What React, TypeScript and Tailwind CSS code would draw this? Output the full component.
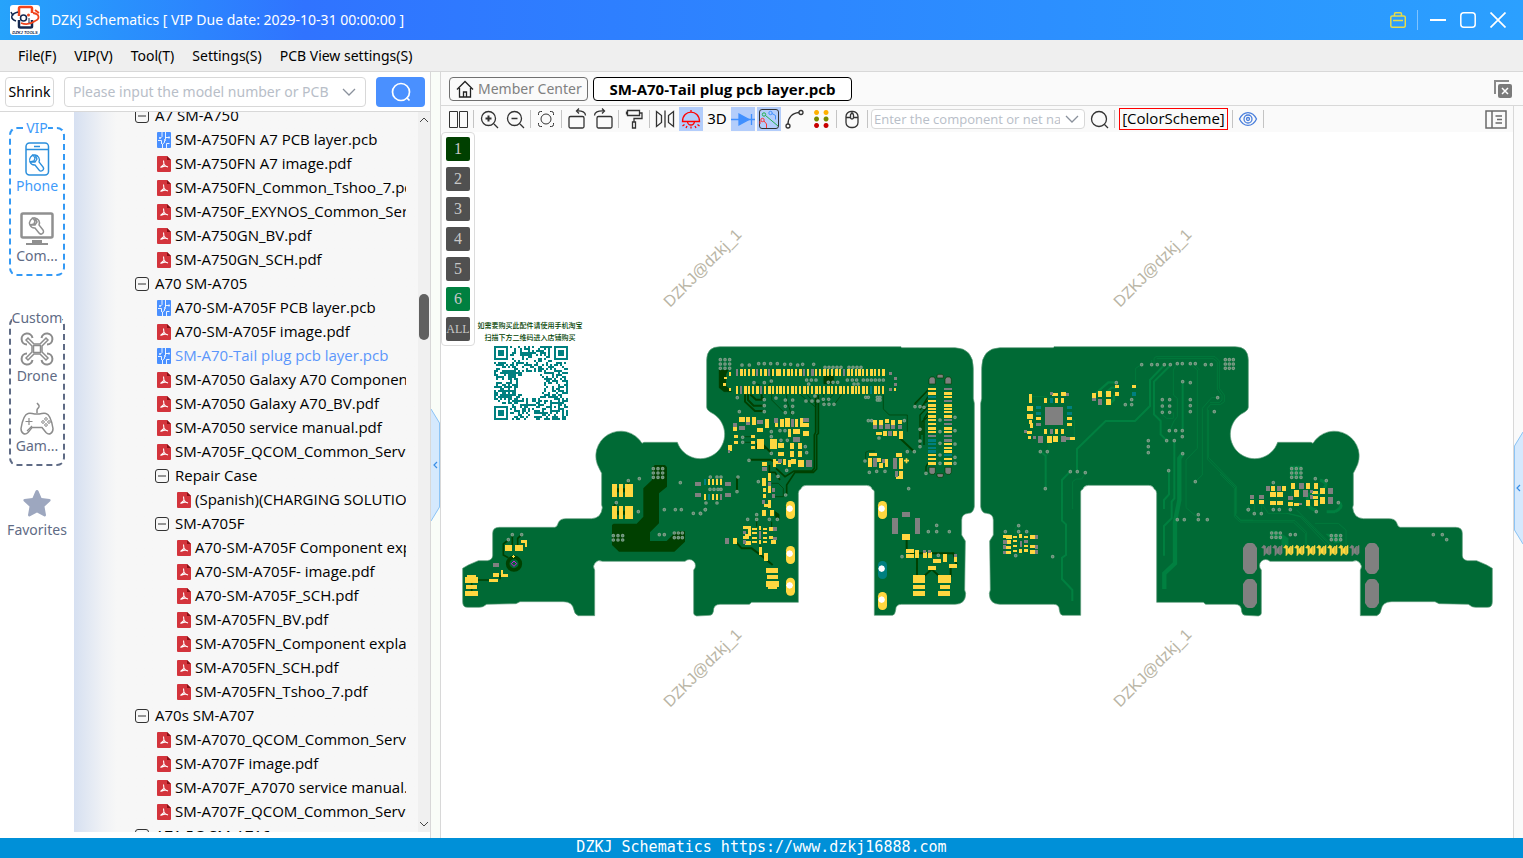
import type { ReactNode } from "react";
import clsx from "clsx";

type Box = [number, number, number, number];
type Point = [number, number];

const YELLOW = "#ffd740";
const GRAY = "#808080";
const TEAL = "#008080";
const BOARD = "#006a35";
const DARK = "#004000";
const TRACE = "#008040";

/* ---------- tree ---------- */

type TreeItem = { kind: "folder" | "pcb" | "pdf"; depth: number; label: string; active?: boolean };

const tree: TreeItem[] = [
  { kind: "folder", depth: 0, label: "A7 SM-A750" },
  { kind: "pcb", depth: 1, label: "SM-A750FN A7 PCB layer.pcb" },
  { kind: "pdf", depth: 1, label: "SM-A750FN A7 image.pdf" },
  { kind: "pdf", depth: 1, label: "SM-A750FN_Common_Tshoo_7.pdf" },
  { kind: "pdf", depth: 1, label: "SM-A750F_EXYNOS_Common_Service.pdf" },
  { kind: "pdf", depth: 1, label: "SM-A750GN_BV.pdf" },
  { kind: "pdf", depth: 1, label: "SM-A750GN_SCH.pdf" },
  { kind: "folder", depth: 0, label: "A70 SM-A705" },
  { kind: "pcb", depth: 1, label: "A70-SM-A705F PCB layer.pcb" },
  { kind: "pdf", depth: 1, label: "A70-SM-A705F image.pdf" },
  { kind: "pcb", depth: 1, label: "SM-A70-Tail plug pcb layer.pcb", active: true },
  { kind: "pdf", depth: 1, label: "SM-A7050 Galaxy A70 Component explain.pdf" },
  { kind: "pdf", depth: 1, label: "SM-A7050 Galaxy A70_BV.pdf" },
  { kind: "pdf", depth: 1, label: "SM-A7050 service manual.pdf" },
  { kind: "pdf", depth: 1, label: "SM-A705F_QCOM_Common_Service.pdf" },
  { kind: "folder", depth: 1, label: "Repair Case" },
  { kind: "pdf", depth: 2, label: "(Spanish)(CHARGING SOLUTION).pdf" },
  { kind: "folder", depth: 1, label: "SM-A705F" },
  { kind: "pdf", depth: 2, label: "A70-SM-A705F Component explain.pdf" },
  { kind: "pdf", depth: 2, label: "A70-SM-A705F- image.pdf" },
  { kind: "pdf", depth: 2, label: "A70-SM-A705F_SCH.pdf" },
  { kind: "pdf", depth: 2, label: "SM-A705FN_BV.pdf" },
  { kind: "pdf", depth: 2, label: "SM-A705FN_Component explain.pdf" },
  { kind: "pdf", depth: 2, label: "SM-A705FN_SCH.pdf" },
  { kind: "pdf", depth: 2, label: "SM-A705FN_Tshoo_7.pdf" },
  { kind: "folder", depth: 0, label: "A70s SM-A707" },
  { kind: "pdf", depth: 1, label: "SM-A7070_QCOM_Common_Service.pdf" },
  { kind: "pdf", depth: 1, label: "SM-A707F image.pdf" },
  { kind: "pdf", depth: 1, label: "SM-A707F_A7070 service manual.pdf" },
  { kind: "pdf", depth: 1, label: "SM-A707F_QCOM_Common_Service.pdf" },
  { kind: "folder", depth: 0, label: "A71 5G SM-A716" },
];

const folderIndent = ["pl-[61px]", "pl-[81px]"];
const fileIndent = ["pl-[83px]", "pl-[83px]", "pl-[103px]"];

const PdfIcon = () => (
  <svg width="14" height="16" viewBox="0 0 14 16" className="shrink-0">
    <path d="M1 0h9l4 4v11a1 1 0 0 1-1 1H1a1 1 0 0 1-1-1V1a1 1 0 0 1 1-1z" fill="#d3343c" />
    <path d="M10 0l4 4h-4z" fill="#8a1016" />
    <path d="M6.500 4.500l.5 4-3.500 3M7 8.500l1.500 1.500 2.500 1M4 11.200l4.500-1.200" fill="none" stroke="#fff" strokeWidth="1.100" />
  </svg>
);

const PcbIcon = () => (
  <svg width="14" height="16" viewBox="0 0 14 16" className="shrink-0">
    <rect width="14" height="16" rx="1" fill="#4a90ff" />
    <path d="M5 0v4.500L3.500 6M8.500 0v7M8.500 5.500h3M1 8.500h3.500V12M5.500 16v-4l2-1.500V9M9.500 16v-4.500h3" fill="none" stroke="#fff" strokeWidth=".9" />
    <circle cx="3" cy="6" r=".9" fill="#fff" />
    <circle cx="12" cy="5.500" r=".9" fill="#fff" />
    <circle cx="8" cy="8" r=".9" fill="#fff" />
  </svg>
);

const TreeRow = ({ item }: { item: TreeItem }) => {
  if (item.kind === "folder") {
    return (
      <li>
        <button className={clsx("flex h-6 w-full items-center gap-[6px] whitespace-nowrap text-left", folderIndent[item.depth])}>
          <svg width="14" height="14" viewBox="0 0 14 14" className="shrink-0" fill="none" stroke="#333">
            <rect x=".5" y=".5" width="13" height="13" rx="2.500" />
            <path d="M3 7h8" />
          </svg>
          {item.label}
        </button>
      </li>
    );
  }
  return (
    <li>
      <button
        className={clsx(
          "flex h-6 w-full items-center gap-1 whitespace-nowrap text-left",
          fileIndent[item.depth],
          item.active && "text-[#5b96fb]"
        )}
      >
        {item.kind === "pdf" ? <PdfIcon /> : <PcbIcon />}
        {item.label}
      </button>
    </li>
  );
};

/* ---------- side navigation ---------- */

const wrench = "M-2-7a5 5 0 0 0-5 7l4-1 1-3-2-3zM-7 0a5 5 0 0 0 5 3l4 5a2 2 0 0 0 4-3L2 0a5 5 0 0 0-4-7l2 4-2 3z";

const PhoneIcon = () => (
  <svg width="34" height="34" viewBox="0 0 34 34" fill="none" stroke="#2b8fdc" strokeWidth="1.500">
    <rect x="6" y="1" width="22.500" height="32" rx="3.500" />
    <path d="M6 7.500h22M14 4.500h6" />
    <path d={wrench} strokeWidth="1.300" transform="translate(17 20)" />
  </svg>
);

const ComputerIcon = () => (
  <svg width="34" height="34" viewBox="0 0 34 34" fill="none" stroke="#909090">
    <rect x="1.500" y="1.500" width="31" height="24" rx="1.500" strokeWidth="2.500" />
    <path d={wrench} strokeWidth="1.500" transform="translate(17 13)" />
    <path d="M12 28h10v3h6v2H6v-2h6z" fill="#909090" stroke="none" />
  </svg>
);

const DroneIcon = () => (
  <svg width="34" height="34" viewBox="0 0 34 34" fill="none" stroke="#8c8c8c" strokeWidth="2">
    <path d="M12.500 6A5.500 5.500 0 1 0 7 12.500M21.500 6A5.500 5.500 0 1 1 27 12.500M12.500 28A5.500 5.500 0 1 1 7 21.500M21.500 28A5.500 5.500 0 1 0 27 21.500" />
    <path d="M6 8l2-2 6 6h6l6-6 2 2-6 6v6l6 6-2 2-6-6h-6l-6 6-2-2 6-6v-6z" strokeWidth="1.500" />
    <path d="M13.500 13.500h7v7h-7z" strokeWidth="1.500" />
  </svg>
);

const GameIcon = () => (
  <svg width="34" height="34" viewBox="0 0 34 34" fill="none" stroke="#8c8c8c" strokeWidth="1.500">
    <path d="M17 11V8c0-2 3-2 2-4.500L17 1" />
    <path d="M8 11.500c3-1 4 .5 9 .5s6-1.500 9-.5c4 1 6 9 7 15 0 5-4 7-7 4l-4-5H12l-4 5c-3 3-7 1-7-4 1-6 3-14 7-15z" />
    <path d="M9 16v7M5.500 19.500h7M7 29l5-5" strokeWidth="1.200" />
    <circle cx="26" cy="17" r="1.300" strokeWidth="1" />
    <circle cx="26" cy="23" r="1.300" strokeWidth="1" />
    <circle cx="23" cy="20" r="1.300" strokeWidth="1" />
    <circle cx="29" cy="20" r="1.300" strokeWidth="1" />
  </svg>
);

const StarIcon = () => (
  <svg width="34" height="34" viewBox="0 0 34 34" fill="#9da7bf">
    <path d="M17 4q1 0 1.500 1l3 7 8 1q2 .5.7 2.200L24.500 20.500 26 29q0 2-2 1.300L17 26.500l-7 3.800Q8 31 8 29l1.500-8.500L3.800 15.200Q2.500 13.500 4.500 13l8-1 3-7Q16 4 17 4z" />
  </svg>
);

const NavItem = ({ icon, label, active }: { icon: ReactNode; label: string; active?: boolean }) => (
  <button className={clsx("flex flex-col items-center text-sm leading-5", active ? "text-[#3f9bfa]" : "text-[#5f6b85]")}>
    {icon}
    <span>{label}</span>
  </button>
);

const SideNav = () => (
  <nav className="flex w-[74px] shrink-0 flex-col items-center bg-white pt-[6px]">
    <fieldset className="w-14 rounded-lg border-2 border-dashed border-[#3399f5] pt-1 pb-2">
      <legend className="mx-auto text-sm leading-5 text-[#3f9bfa]">VIP</legend>
      <div className="flex flex-col items-center gap-4">
        <NavItem icon={<PhoneIcon />} label="Phone" active />
        <NavItem icon={<ComputerIcon />} label="Com..." />
      </div>
    </fieldset>
    <fieldset className="mt-8 w-14 rounded-lg border-2 border-dashed border-[#5f6b85] pt-1 pb-2">
      <legend className="mx-auto text-sm leading-5 text-[#5f6b85]">Custom</legend>
      <div className="flex flex-col items-center gap-4">
        <NavItem icon={<DroneIcon />} label="Drone" />
        <NavItem icon={<GameIcon />} label="Gam..." />
      </div>
    </fieldset>
    <div className="mt-5">
      <NavItem icon={<StarIcon />} label="Favorites" />
    </div>
  </nav>
);

const Sidebar = () => (
  <aside className="flex w-[431px] shrink-0 flex-col border-r border-[#d8d8d8] bg-white">
    <div className="flex h-10 shrink-0 items-center gap-[10px] border-b border-[#d8d8d8] pr-[5px] pl-[5px]">
      <button className="h-[30px] w-[49px] rounded border border-[#d8d8d8] text-sm">Shrink</button>
      <div className="flex h-[30px] flex-1 items-center rounded border border-[#d8d8d8] pr-2 pl-2">
        <input
          aria-label="Model number"
          placeholder="Please input the model number or PCB"
          className="min-w-0 flex-1 text-sm outline-none placeholder:text-[#b8bec8]"
        />
        <svg width="16" height="10" viewBox="0 0 16 10" fill="none" stroke="#8a919c" strokeWidth="1.300">
          <path d="M2 2l6 6 6-6" />
        </svg>
      </div>
      <button aria-label="Search" className="flex h-[30px] w-[49px] items-center justify-center rounded bg-[#4a90ff]">
        <svg width="20" height="20" viewBox="0 0 20 20" fill="none" stroke="#fff" strokeWidth="1.700">
          <circle cx="10" cy="10" r="8.500" />
          <path d="M15.500 15.500l3 3" />
        </svg>
      </button>
    </div>
    <div className="mb-[6px] flex min-h-0 flex-1">
      <SideNav />
      <div className="flex min-w-0 flex-1 bg-[#f7f7f7] bg-linear-to-r from-[#d6e0f1] via-[#eff1f5] via-8% to-[#f7f7f7] to-12%">
        <ul className="mr-3 min-w-0 flex-1 overflow-hidden font-['Open_Sans','Noto_Sans',sans-serif] text-[15px]">
          <li className="-mt-2" />
          {tree.map((item, index) => (
            <TreeRow key={index} item={item} />
          ))}
        </ul>
        <div className="flex w-3 shrink-0 flex-col items-center justify-between bg-[#f0f0f0] py-[5px]">
          <svg width="10" height="6" viewBox="0 0 10 6" fill="none" stroke="#444">
            <path d="M1 5l4-4 4 4" />
          </svg>
          <div className="w-full flex-1">
            <div className="h-[171px] max-h-1/4" />
            <div className="mx-px h-[46px] rounded-full bg-[#606060]" />
          </div>
          <svg width="10" height="6" viewBox="0 0 10 6" fill="none" stroke="#444">
            <path d="M1 1l4 4 4-4" />
          </svg>
        </div>
      </div>
    </div>
  </aside>
);

/* ---------- toolbar ---------- */

const Separator = () => <span className="mx-px h-[18px] w-px shrink-0 bg-[#c4c4c4]" />;

const Tool = ({ label, on, children }: { label: string; on?: boolean; children: ReactNode }) => (
  <button aria-label={label} className={clsx("flex size-6 shrink-0 items-center justify-center", on && "bg-[#b3cdfb]")}>
    {children}
  </button>
);

const Icon = ({ children, color = "#333" }: { children: ReactNode; color?: string }) => (
  <svg width="24" height="24" viewBox="0 0 24 24" fill="none" stroke={color} strokeWidth="1.300">
    {children}
  </svg>
);

const Toolbar = () => (
  <div className="flex h-[26px] shrink-0 items-center gap-[2px] bg-[#fafafa] pr-[6px] pl-[5px]">
    <Tool label="Split view">
      <Icon>
        <path d="M3.500 4.500h8v16h-8zM13.500 4.500h8v16h-8z" strokeWidth="1" />
      </Icon>
    </Tool>
    <Separator />
    <Tool label="Zoom in">
      <Icon>
        <circle cx="11.500" cy="11.500" r="7" />
        <path d="M17 17l4 4" />
        <path d="M8.500 11.500h6M11.500 8.500v6" strokeWidth="2" />
      </Icon>
    </Tool>
    <Tool label="Zoom out">
      <Icon>
        <circle cx="11.500" cy="11.500" r="7" />
        <path d="M17 17l4 4M8.500 11.500h6" />
      </Icon>
    </Tool>
    <Separator />
    <Tool label="Fit">
      <Icon>
        <circle cx="12" cy="12" r="5" strokeWidth="1" />
        <path d="M4.500 8V6.500a2 2 0 0 1 2-2H8M16 4.500h1.500a2 2 0 0 1 2 2V8M19.500 16v1.500a2 2 0 0 1-2 2H16M8 19.500H6.500a2 2 0 0 1-2-2V16" strokeWidth="1" />
      </Icon>
    </Tool>
    <Separator />
    <Tool label="Rotate left">
      <Icon>
        <rect x="4" y="9.500" width="15" height="11.500" rx="1.500" />
        <path d="M20.500 8.500c0-3-3-5-9-4.500M14 1.500L11.500 4 14 6.500" />
      </Icon>
    </Tool>
    <Tool label="Rotate right">
      <Icon>
        <rect x="6" y="9.500" width="15" height="11.500" rx="1.500" />
        <path d="M3.500 8.500c0-3 3-5 10-4.500M11 1.500L13.500 4 11 6.500" />
      </Icon>
    </Tool>
    <Separator />
    <Tool label="Paint">
      <Icon>
        <path d="M5.500 3.500h12v5h-12zM17.500 6h2.500v5.500h-8v3.500M10.500 15h3v6h-3z" />
        <path d="M4.500 4.500v3" />
      </Icon>
    </Tool>
    <Separator />
    <Tool label="Mirror">
      <Icon>
        <path d="M3.500 4.500v15l5-4v-7zM12 3.500v17M20.500 4.500v15l-5-4v-7z" />
      </Icon>
    </Tool>
    <Tool label="Light" on>
      <Icon color="#f00">
        <path d="M12 3v2M3.500 14.500c0-12.500 17-12.500 17 0zM8.500 14.500a3.500 3.500 0 0 0 7 0M5.500 17.500L3.500 19M18.500 17.500l2 1.500M8 19l-1 2M12 19.500v2M16 19l1 2" />
      </Icon>
    </Tool>
    <Tool label="3D view">
      <span className="text-[15px]">3D</span>
    </Tool>
    <Tool label="Diode" on>
      <Icon color="#4090ff">
        <path d="M0 12.500h24M20.500 7v11" />
        <path d="M8 7v11l10-5.500z" fill="#4090ff" />
      </Icon>
    </Tool>
    <Tool label="Nets" on>
      <Icon>
        <rect x="2.500" y="2.500" width="19" height="19" rx="2.500" strokeWidth="1" />
        <g strokeWidth="1">
          <path d="M8.500 8.500L21 19" stroke="#22b14c" />
          <circle cx="7" cy="7.500" r="1.700" stroke="#22b14c" />
          <circle cx="13.500" cy="6" r="1.700" stroke="#4090ff" />
          <path d="M15 6.500l3.500 2v4" stroke="#4090ff" />
          <path d="M3 17v-3M7 14l2.500 3v4" stroke="#f33" />
          <circle cx="5.500" cy="13" r="1.700" stroke="#f33" />
        </g>
      </Icon>
    </Tool>
    <Tool label="Curve">
      <Icon>
        <path d="M5 17c0-6 4-11 11-11.500" />
        <circle cx="5" cy="19" r="2" />
        <circle cx="18" cy="5.500" r="2" />
      </Icon>
    </Tool>
    <Tool label="Colors">
      <Icon color="none">
        <path d="M7.500 3a2.500 2.500 0 1 0 .1 0zM17 3a2.500 2.500 0 1 0 .1 0z" fill="#ffb000" />
        <path d="M7.500 9.500a2.500 2.500 0 1 0 .1 0zM17 9.500a2.500 2.500 0 1 0 .1 0z" fill="#788a00" />
        <path d="M7.500 16a2.500 2.500 0 1 0 .1 0zM17 16a2.500 2.500 0 1 0 .1 0z" fill="#c80000" />
      </Icon>
    </Tool>
    <Separator />
    <Tool label="Mouse">
      <Icon>
        <rect x="6" y="4.500" width="12" height="16" rx="5" />
        <path d="M6 10.500h12M12 4.500v2" />
        <rect x="10.500" y="6.500" width="3" height="5.500" rx="1.500" fill="#fafafa" />
      </Icon>
    </Tool>
    <Separator />
    <div className="flex h-5 w-[214px] items-center rounded border border-[#d8d8d8] bg-white pr-1 pl-[2px]">
      <input
        aria-label="Component or net"
        placeholder="Enter the component or net name"
        className="min-w-0 flex-1 font-['Open_Sans','Noto_Sans',sans-serif] text-[13px] outline-none placeholder:text-[#b8bec8]"
      />
      <svg width="16" height="10" viewBox="0 0 16 10" className="ml-1" fill="none" stroke="#8a919c" strokeWidth="1.300">
        <path d="M2 2l6 6 6-6" />
      </svg>
    </div>
    <Tool label="Find">
      <Icon>
        <circle cx="12" cy="12" r="7.500" />
        <path d="M17.500 17.500l3.500 3.500" />
      </Icon>
    </Tool>
    <Separator />
    <button className="mx-px flex h-[22px] w-[109px] items-center justify-center border border-[#f00] font-['Open_Sans','Noto_Sans',sans-serif] text-[15px]">
      [ColorScheme]
    </button>
    <Separator />
    <Tool label="Visibility">
      <Icon color="#4a7fdc">
        <path d="M3.500 12c4-8.500 13-8.500 17 0-4 8.500-13 8.500-17 0z" />
        <circle cx="12" cy="12" r="4" />
        <circle cx="12" cy="12" r="1.500" />
      </Icon>
    </Tool>
    <Separator />
    <button aria-label="Toggle panel" className="ml-auto">
      <svg width="22" height="19" viewBox="0 0 22 19" fill="none" stroke="#6a6a6a" strokeWidth="1.500">
        <path d="M1 1h20v17H1zM7 1v17M10.500 6h6.500M12 9.500h5M10.500 13h6.500" />
      </svg>
    </button>
  </div>
);

/* ---------- board drawing, in thirds of a pixel from (440, 320) ---------- */

const outline =
  "M68 745L85 735L115 722L142 722Q158 720 158 706L158 640Q158 622 178 622L345 622Q352 620 355 608Q360 596 378 596L455 596Q485 594 487 562L485 555L485 460L478 446A74 74 0 1 1 606 370L612 367L712 367A73 73 0 1 0 812 277Q800 270 800 262L800 120Q800 80 840 80L1383 80L1385 83L1545 83Q1600 85 1600 145L1600 235L1603 250L1603 560Q1600 580 1585 580Q1565 582 1565 600L1565 645L1576 663L1574 810L1577 820Q1577 853 1545 853L1385 853Q1367 853 1367 870Q1365 886 1357 886L1303 886L1303 515Q1303 510 1297 508Q1293 496 1280 496L1098 496Q1086 497 1083 506Q1075 510 1075 520L1075 847L935 847L928 853L840 853Q820 853 820 875Q818 886 808 886L770 888Q761 886 761 880L761 750A18 18 0 0 0 735 724L487 724A18 18 0 0 0 464 750L464 887L415 887Q403 882 402 870Q398 845 370 845L240 845L228 851L140 853Q130 862 118 862L82 862Q68 862 68 845Z";

const Pads = ({ fill, boxes }: { fill: string; boxes: Box[] }) => (
  <path fill={fill} shapeRendering="crispEdges" d={boxes.map(([x, y, w, h]) => `M${x} ${y}h${w}v${h}h${-w}z`).join("")} />
);

const circles = (at: Point[], r: number) => at.map(([x, y]) => `M${x - r} ${y}a${r} ${r} 0 1 0 ${2 * r} 0a${r} ${r} 0 1 0 ${-2 * r} 0z`).join("");

const Vias = ({ at }: { at: Point[] }) => (
  <g>
    <path fill="#7a9c86" d={circles(at, 5.5)} />
    <path fill="#3d7a56" d={circles(at, 1.5)} />
  </g>
);

const viaGrid = (x: number, y: number, cols: number, rows: number, dx = 14, dy = 13): Point[] =>
  Array.from({ length: cols * rows }, (_, i): Point => [x + (i % cols) * dx, y + Math.floor(i / cols) * dy]);

const strip = (count: number, skip: number[], box: (i: number) => Box): Box[] =>
  Array.from({ length: count }, (_, i) => i)
    .filter((i) => !skip.includes(i))
    .map(box);

const topPad = (i: number): Box => [108 + Math.round(i * 3.95) * 3, 102, i % 3 === 1 ? 9 : 6, 21];
const bottomPad = (i: number): Box => [108 + Math.round(i * 3.95) * 3, 153, i % 3 === 2 ? 9 : 6, 24];
const leftRow = (i: number): Box => [684, 159 + Math.round(i * 3.9) * 3, 24, i % 3 === 1 ? 9 : 6];
const rightRow = (i: number): Box => [732, 159 + Math.round(i * 3.9) * 3, 24, i % 3 === 1 ? 9 : 6];

const topGray = [0, 5, 8, 17, 19, 27];
const bottomGray = [1, 6];
const leftTeal = [2, 13, 14, 15, 16];
const rightGray = [0, 3, 8, 9, 12, 13];

const ChargerArea = () => (
  <g>
    <path
      fill={DARK}
      d="M636 442L645 435H675L681 442V500L657 520V610L630 637V663H680L705 638L715 634H735V665L703 695H537L516 675V615L521 611H590L610 590V505L636 480Z"
    />
    <path d="M217 645V675M233 675V655L245 644M205 660L190 672V705L205 713M110 780H150M180 765V778M530 548L520 560M565 482V492M95 785V820" fill="none" stroke={DARK} strokeWidth="5" />
    <circle cx="222" cy="731" r="19" fill="none" stroke={DARK} strokeWidth="11" />
    <path d="M222 723L230 731L222 739L214 731Z" fill="none" stroke="#f0f" strokeWidth="2.500" />
    <path d="M531 505h24v12h-24zM531 572h24v12h-24z" fill={DARK} />
    <Pads
      fill={YELLOW}
      boxes={[
        [515, 491, 16, 40], [537, 491, 12, 40], [555, 491, 24, 40], [515, 558, 16, 39], [537, 558, 12, 39], [555, 558, 24, 39],
        [195, 675, 21, 18], [225, 675, 24, 18], [243, 660, 18, 8], [255, 663, 6, 18], [81, 765, 27, 6], [75, 771, 39, 18],
        [78, 795, 33, 12], [75, 813, 39, 15], [159, 759, 18, 12], [147, 777, 27, 9], [183, 750, 6, 21], [189, 762, 14, 9],
        [216, 708, 9, 3], [219, 705, 3, 9], [804, 477, 6, 18], [816, 477, 6, 18], [828, 477, 6, 18], [840, 477, 6, 18],
        [792, 522, 6, 18], [816, 522, 6, 18], [828, 522, 6, 18],
      ]}
    />
    <Pads fill={TEAL} boxes={[[792, 477, 6, 18], [804, 522, 6, 18]]} />
    <Pads
      fill={GRAY}
      boxes={[[765, 486, 18, 12], [765, 519, 18, 12], [855, 486, 18, 12], [855, 519, 18, 12], [840, 522, 6, 18], [159, 729, 18, 12], [855, 654, 12, 18]]}
    />
    <Vias
      at={[
        ...viaGrid(640, 446, 3, 3), ...viaGrid(520, 647, 3, 2), ...viaGrid(703, 639, 3, 2, 12, 14),
        [598, 476], [721, 488], [565, 482], [529, 548], [595, 575], [673, 569], [706, 569], [724, 569], [760, 580], [781, 580],
        [796, 569], [658, 644], [673, 644], [217, 644], [245, 644], [205, 659], [810, 508], [822, 508], [834, 508], [843, 508],
        [798, 549], [831, 549], [811, 471], [831, 471], [843, 471],
      ]}
    />
  </g>
);

const Pill = ({ x, y, fill }: { x: number; y: number; fill: string }) => (
  <g>
    <rect x={x} y={y} width="27" height="54" rx="13" fill={fill} />
    <path d={`M${x + 11} ${y + 23}m-10 0l3-7 7-3 7 3 3 7-3 7-7 3-7-3z`} fill="#fff" />
  </g>
);

const ConnectorArea = () => (
  <g transform="translate(780 45)">
    <g fill="none" stroke={DARK}>
      <path d="M57 105H85L78 118V152L95 170H72L57 158Z" fill={DARK} />
      <path d="M355 180V295L350 300V402L340 412H285L260 450V478M347 180V292L343 300V400L336 408H282L255 425L228 400M208 390V420M240 435L225 412L205 412" strokeWidth="5" />
      <path d="M135 178V200L165 228H190M144 178V195L161 212H190M153 178V180L168 194H190M185 178V190H192M147 374H210L228 382M111 428V472M105 618L125 640H155L182 660L218 690M180 320L215 355M600 310L643 350M171 325V340H200" strokeWidth="6" />
      <path d="M550 180V222L568 240H622V290M215 178V195L252 232M260 178V195L275 240M300 178L345 215M320 178L350 210M370 178V205M400 178L375 205M425 178L402 210M215 105V140L205 153M280 105L300 120M180 150L165 145M215 445H235L250 460V485H225M497 378V352L505 348H525M645 210L680 170M130 305H155M130 322H155" strokeWidth="2" />
      <path d="M645 212V205L684 165M660 225L684 185M672 225V205L684 197M660 330V240L684 215M672 330V250L684 232M666 300V260L690 240M678 415V395L684 385" strokeWidth="4" />
      <path d="M620 615V645M651 665V725M670 725L695 703L720 725M752 695V725M630 655H760L770 690" strokeWidth="6" />
      <path d="M372 122h28v24h-28zM225 530l12 8v14h-8zM170 540v35M180 630v20M215 560V580" strokeWidth="3" fill={DARK} />
    </g>
    <Vias
      at={[
        ...viaGrid(61, 74, 3, 3), ...viaGrid(375, 97, 5, 1, 12), ...viaGrid(447, 97, 4, 1, 12), ...viaGrid(256, 195, 2, 3, 22, 19),
        ...viaGrid(318, 198, 3, 1, 18), ...viaGrid(490, 135, 6, 1, 12), ...viaGrid(765, 247, 1, 4, 0, 40), ...viaGrid(720, 255, 1, 4, 0, 35),
        ...viaGrid(505, 257, 2, 1, 10), ...viaGrid(497, 187, 2, 1, 8), ...viaGrid(532, 187, 2, 2, 8, 8), ...viaGrid(685, 590, 2, 1, 63),
        ...viaGrid(372, 208, 3, 1, 15), ...viaGrid(320, 135, 3, 1, 14), ...viaGrid(385, 142, 3, 1, 14),
        [126, 90], [148, 90], [176, 86], [193, 86], [212, 86], [232, 86], [254, 88], [272, 88], [293, 90], [308, 88], [341, 88],
        [112, 188], [193, 194], [193, 212], [193, 230], [118, 230], [228, 189], [162, 143], [193, 143], [214, 138], [442, 135],
        [457, 135], [470, 135], [462, 147], [474, 147], [326, 147], [345, 183], [370, 193], [386, 193], [316, 335], [320, 353],
        [214, 290], [240, 287], [255, 287], [243, 316], [262, 316], [128, 307], [128, 322], [214, 305], [214, 355], [147, 376],
        [260, 406], [175, 440], [234, 424], [257, 480], [114, 426], [111, 470], [170, 539], [143, 553], [170, 553], [208, 553],
        [232, 553], [508, 412], [530, 409], [555, 409], [495, 378], [537, 309], [613, 257], [622, 350], [643, 350], [645, 215],
        [660, 215], [672, 217], [660, 283], [660, 318], [660, 335], [678, 415], [626, 461], [710, 571], [710, 590], [606, 665],
        [715, 661], [720, 385], [765, 385], [16, 524], [2, 536],
      ]}
    />
    <Pads
      fill={YELLOW}
      boxes={[
        ...strip(38, topGray, topPad),
        ...strip(38, [...bottomGray, 34], bottomPad),
        ...strip(20, [...leftTeal, 12], leftRow),
        ...strip(20, [...rightGray, 17], rightRow),
        [69, 144, 9, 9], [72, 125, 8, 6], [87, 112, 5, 10], [87, 158, 7, 9], [570, 112, 6, 8], [582, 160, 5, 8],
        [117, 246, 18, 15], [138, 246, 12, 15], [156, 246, 12, 24], [195, 252, 12, 27], [171, 279, 18, 12], [99, 276, 12, 12],
        [102, 300, 12, 9], [102, 318, 12, 9], [84, 330, 12, 18], [153, 300, 12, 9], [153, 318, 12, 9], [153, 333, 12, 9],
        [171, 312, 21, 30], [210, 312, 21, 30], [225, 264, 9, 12], [240, 252, 12, 24], [255, 249, 15, 27], [285, 252, 10, 24],
        [300, 249, 9, 27], [309, 264, 18, 12], [264, 282, 9, 24], [279, 282, 21, 15], [309, 288, 18, 15], [234, 324, 18, 15],
        [234, 350, 18, 12], [270, 324, 12, 18], [294, 324, 12, 18], [270, 348, 12, 18], [294, 348, 12, 18], [186, 381, 15, 12],
        [219, 372, 9, 24], [228, 378, 15, 9], [249, 372, 9, 18], [264, 375, 9, 21], [273, 372, 15, 15], [294, 375, 18, 21],
        [186, 429, 12, 24], [204, 414, 9, 24], [189, 459, 9, 12], [204, 453, 9, 21], [189, 477, 9, 12], [204, 495, 9, 24],
        [192, 507, 18, 9], [186, 525, 12, 18], [210, 525, 12, 18], [129, 573, 24, 9], [144, 582, 9, 15], [135, 597, 18, 6],
        [129, 603, 18, 9], [135, 618, 18, 12], [156, 579, 15, 6], [156, 591, 15, 6], [156, 606, 15, 6], [156, 618, 15, 6],
        [177, 573, 6, 12], [177, 615, 6, 12], [189, 579, 12, 6], [189, 591, 12, 6], [189, 606, 12, 6], [189, 618, 12, 6],
        [207, 576, 12, 12], [207, 603, 12, 9], [213, 615, 15, 12], [99, 609, 12, 18], [177, 636, 9, 24], [192, 654, 12, 24],
        [198, 699, 36, 15], [201, 720, 33, 12], [198, 738, 39, 18], [204, 753, 27, 9],
        [519, 255, 12, 15], [537, 255, 12, 15], [555, 252, 12, 12], [573, 255, 12, 15], [594, 255, 12, 12], [528, 291, 18, 9],
        [549, 288, 12, 15], [579, 288, 12, 15], [597, 288, 12, 24], [507, 354, 24, 9], [504, 369, 12, 27], [531, 369, 12, 12],
        [537, 384, 12, 15], [555, 372, 10, 24], [588, 354, 18, 12], [597, 369, 12, 33], [597, 408, 12, 24], [588, 423, 12, 9],
        [606, 597, 24, 18], [618, 642, 24, 12], [618, 657, 24, 12], [645, 645, 12, 24], [669, 651, 12, 18], [684, 651, 12, 18],
        [699, 672, 24, 12], [729, 657, 12, 24], [747, 687, 24, 12], [762, 666, 9, 15], [684, 693, 24, 12],
        [639, 720, 36, 24], [639, 750, 36, 12], [639, 768, 36, 15], [714, 720, 39, 24], [720, 750, 30, 12], [714, 768, 36, 15],
      ]}
    />
    <Pads
      fill={GRAY}
      boxes={[
        ...topGray.map(topPad),
        ...bottomGray.map(bottomPad),
        ...rightGray.map(rightRow),
        leftRow(12),
        [117, 273, 18, 12], [138, 261, 12, 9], [171, 255, 18, 12], [99, 264, 12, 12], [222, 249, 12, 15], [274, 252, 9, 24],
        [309, 249, 18, 12], [279, 306, 21, 15], [318, 375, 18, 21], [186, 396, 15, 12], [84, 345, 6, 9], [234, 372, 12, 12],
        [204, 441, 9, 12], [186, 495, 9, 12], [216, 477, 9, 12], [216, 459, 9, 12], [130, 588, 9, 9], [130, 615, 9, 12],
        [177, 588, 6, 24], [219, 576, 12, 12], [219, 606, 12, 9], [75, 609, 12, 18], [567, 112, 9, 9], [582, 126, 9, 9],
        [582, 144, 9, 9], [567, 158, 9, 9], [519, 270, 12, 12], [537, 270, 12, 12], [555, 267, 15, 15], [573, 270, 12, 12],
        [594, 270, 12, 12], [564, 288, 12, 15], [519, 369, 12, 27], [579, 369, 12, 33], [585, 408, 9, 18], [606, 531, 24, 15],
        [576, 549, 18, 48], [645, 549, 15, 48], [669, 645, 9, 9], [684, 645, 9, 9], [762, 657, 9, 9], [546, 372, 9, 12],
      ]}
    />
    <Pads fill={TEAL} boxes={[...leftTeal.map(leftRow), rightRow(17), bottomPad(34)]} />
    <path
      d="M687 147V132L692 126H702L706 132V147ZM735 147V132L740 126H750L754 132V147ZM711 129V121L716 118H726L730 121V129ZM687 397V412L692 418H702L706 412V397ZM735 397V412L740 418H750L754 412V397ZM711 416V424L716 427H726L730 424V416Z"
      fill={GRAY}
      stroke={DARK}
      strokeWidth="2"
    />
    <path d="M612 377h15M619.500 370v15" stroke={YELLOW} strokeWidth="5" />
    <Pill x={258} y={498} fill={YELLOW} />
    <Pill x={258} y={633} fill={YELLOW} />
    <Pill x={258} y={728} fill={YELLOW} />
    <Pill x={534} y={498} fill={YELLOW} />
    <Pill x={534} y={678} fill={TEAL} />
    <Pill x={534} y={771} fill={YELLOW} />
  </g>
);

const BackLeftArea = () => (
  <g transform="translate(1590 45)">
    <g fill="none" stroke={TRACE}>
      <path
        d="M583 90L540 135V213L495 258H407L321 342V408M602 90L552 140V238L572 258V298L590 316M300 410L276 435V557L288 568V660L276 668V732L307 765V798M613 316V490L605 500V550L582 573V662M597 408V478L582 495V522M227 460V362L212 350M638 140V285"
        strokeWidth="6"
      />
      <path d="M638 356L628 370V495L615 560V685L583 715V762" strokeWidth="13" />
      <path
        d="M552 88V70L558 65H735L748 78V160L763 180V200L752 208H722L712 220V372L797 458V540L812 555H850M545 88V75M560 71H730L742 80V162L756 182V195L748 203H720M497 140V100L515 88M308 522V440L318 432H335L346 415M743 188H725L697 220V420L676 440M662 88L682 105V340L648 375V518L680 545M675 88L688 105M610 105V180L622 190V245L612 258L600 285M618 90L610 105M578 195V240L590 250H610V232M182 185H228L240 195M313 308V255H300M237 325V348L230 362M135 600V580L145 572M175 590L185 598M135 660H160M716 225V368L800 455V536"
        strokeWidth="2"
      />
      <path d="M372 180L415 142H438M405 175L425 158H440M420 205L432 195V180" strokeWidth="7" />
    </g>
    <Pads
      fill={YELLOW}
      boxes={[
        [177, 177, 9, 27], [171, 213, 18, 15], [171, 237, 18, 15], [177, 255, 9, 12], [180, 264, 9, 15], [171, 288, 15, 9],
        [222, 189, 9, 15], [255, 189, 9, 15], [273, 189, 9, 15], [246, 174, 18, 9], [273, 171, 15, 12], [291, 246, 15, 9],
        [291, 264, 15, 9], [198, 246, 15, 9], [222, 282, 9, 15], [255, 282, 9, 15], [273, 282, 9, 15], [231, 303, 15, 21],
        [249, 303, 15, 18], [300, 306, 15, 9], [174, 303, 9, 9], [366, 174, 12, 15], [384, 168, 12, 18], [408, 168, 15, 18],
        [408, 192, 15, 18], [435, 150, 12, 9], [435, 171, 12, 12], [486, 150, 12, 9], [99, 600, 12, 9], [108, 600, 18, 12],
        [129, 603, 12, 6], [147, 597, 9, 12], [162, 603, 12, 6], [180, 600, 15, 12], [111, 615, 12, 12], [129, 615, 12, 6],
        [129, 630, 12, 6], [105, 633, 18, 9], [162, 630, 12, 6], [180, 630, 15, 9], [129, 645, 12, 6], [147, 642, 9, 12],
        [162, 642, 12, 9], [180, 645, 15, 12], [108, 648, 15, 9],
      ]}
    />
    <Pads
      fill={GRAY}
      boxes={[
        [225, 216, 54, 54], [240, 171, 9, 9], [288, 174, 9, 9], [198, 264, 15, 9], [240, 282, 9, 15], [204, 303, 15, 21],
        [273, 303, 15, 18], [288, 306, 12, 9], [162, 285, 9, 9], [189, 303, 9, 9], [366, 189, 12, 9], [384, 192, 12, 18],
        [195, 600, 9, 12], [99, 615, 12, 12], [150, 618, 6, 18], [162, 615, 12, 9], [99, 630, 9, 12], [195, 630, 9, 12],
        [99, 648, 9, 9], [195, 645, 9, 12],
      ]}
    />
    <Pads fill={TEAL} boxes={[[240, 189, 9, 15], [198, 213, 15, 9], [198, 231, 15, 9], [291, 213, 15, 9], [291, 231, 15, 9], [486, 171, 12, 12]]} />
    <Vias
      at={[
        ...viaGrid(766, 74, 3, 3, 12), ...viaGrid(577, 194, 2, 3, 22, 19), ...viaGrid(661, 194, 1, 3, 0, 18), ...viaGrid(535, 317, 1, 3, 0, 18),
        [515, 89], [545, 89], [562, 89], [583, 89], [601, 89], [622, 86], [637, 86], [661, 86], [676, 86], [706, 89], [724, 89],
        [638, 140], [661, 143], [743, 188], [733, 230], [598, 287], [617, 287], [637, 287], [637, 305], [590, 317], [613, 317],
        [638, 356], [596, 407], [676, 440], [301, 410], [322, 410], [346, 413], [226, 461], [211, 350], [232, 350], [439, 143],
        [466, 209], [485, 209], [485, 194], [685, 539], [622, 554], [643, 554], [685, 554], [712, 554], [146, 572], [106, 590],
        [146, 590], [170, 590], [137, 662], [248, 665], [835, 524],
      ]}
    />
  </g>
);

const UsbArea = () => (
  <g transform="translate(2340 240)">
    <g fill="none" stroke={TRACE}>
      <path
        d="M0 215L47 262V347L62 362H225L260 397V435M0 222L43 265V350L60 366H220L256 400V435M85 328V315M103 340V310M125 340V310L145 340H205L245 350L330 435M230 330L285 385L335 435M285 370H355L378 390V440M160 328V315M178 328V315M210 328V318M200 340L240 350L325 440M215 255V310"
        strokeWidth="2"
      />
      <path d="M345 335Q375 320 355 305M320 335H345M300 285Q260 270 262 300Q265 330 290 330M300 240Q330 250 310 265" strokeWidth="9" />
      <path d="M150 392H170L205 415V440H185V420L150 415ZM210 198H245V235H210ZM318 402H365V425L345 430Z" fill={TRACE} strokeWidth="1" />
    </g>
    <Pads
      fill={YELLOW}
      boxes={[
        [90, 300, 12, 12], [117, 300, 15, 12], [153, 258, 12, 15], [186, 258, 12, 15], [150, 276, 18, 15], [171, 276, 18, 15],
        [150, 303, 18, 12], [171, 303, 18, 12], [213, 249, 12, 18], [222, 270, 15, 21], [204, 306, 15, 12], [222, 308, 15, 9],
        [258, 249, 12, 18], [258, 300, 12, 18], [282, 249, 12, 18], [276, 273, 18, 9], [276, 288, 18, 9], [282, 300, 12, 18],
        [300, 264, 15, 18], [300, 291, 15, 21],
      ]}
    />
    <Pads
      fill={GRAY}
      boxes={[
        [90, 285, 12, 12], [117, 285, 15, 12], [138, 258, 12, 15], [171, 258, 12, 15], [204, 288, 15, 12], [237, 249, 15, 18],
        [249, 270, 15, 21], [270, 270, 9, 9], [270, 285, 9, 12], [324, 264, 15, 18], [324, 291, 15, 21], [237, 308, 8, 8],
      ]}
    />
    {Array.from({ length: 9 }, (_, i) => {
      const x = 125 + i * 33;
      const color = i < 2 || i > 7 ? GRAY : YELLOW;
      return (
        <path
          key={x}
          d={`M${x} 443l6-7 6 3v22l-5 6v-22zM${x + 13} 448l8-10v26l-8-6zM${x + 23} 440l5-4v24l-5 5z`}
          fill={color}
          stroke={color}
          strokeWidth="2"
          clipPath="url(#usb-row)"
        />
      );
    })}
    <clipPath id="usb-row">
      <rect x="120" y="430" width="301" height="44" />
    </clipPath>
    {[69, 435].map((x) => (
      <g key={x} fill={GRAY}>
        <path d={`M${x} 444l8-12 6-3h14l6 3 8 12v63l-8 12-6 3h-14l-6-3-8-12z`} />
        <path d={`M${x} 552l8-12 6-3h14l6 3 8 12v57l-8 12-6 3h-14l-6-3-8-12z`} />
      </g>
    ))}
    <Vias
      at={[
        ...viaGrid(215, 206, 3, 3), ...viaGrid(155, 399, 3, 2, 13, 13), ...viaGrid(334, 407, 3, 2, 14, 12),
        [160, 248], [286, 236], [319, 242], [355, 308], [289, 335], [85, 329], [103, 341], [124, 341], [160, 329], [178, 329],
        [211, 329], [211, 404], [226, 404], [640, 404], [667, 404], [680, 419],
      ]}
    />
  </g>
);

const QR_SIZE = 37;

const finder = (x: number, y: number) => {
  if (x < 0 || x > 6 || y < 0 || y > 6) return false;
  return Math.max(Math.abs(x - 3), Math.abs(y - 3)) !== 2;
};

const qrModule = (x: number, y: number) => {
  if (x < 8 && y < 8) return finder(x, y);
  if (x > QR_SIZE - 9 && y < 8) return finder(x - QR_SIZE + 7, y);
  if (x < 8 && y > QR_SIZE - 9) return finder(x, y - QR_SIZE + 7);
  const ring = Math.max(Math.abs(x - 30), Math.abs(y - 30));
  if (ring < 3) return ring !== 1;
  if (Math.hypot(x - 18, y - 19) < 7) return false;
  const hash = Math.sin(x * 12.9898 + y * 78.233) * 43758.5453;
  return hash - Math.floor(hash) < 0.52;
};

const QrCode = () => {
  const cells = Array.from({ length: QR_SIZE * QR_SIZE }, (_, i) => [i % QR_SIZE, Math.floor(i / QR_SIZE)]).filter(([x, y]) => qrModule(x, y));
  return (
    <path
      transform="translate(494 346)"
      fill={TEAL}
      shapeRendering="crispEdges"
      d={cells.map(([x, y]) => `M${x * 2} ${y * 2}h2v2h-2z`).join("")}
    />
  );
};

const Board = () => (
  <svg viewBox="441 132 1072 706" className="absolute inset-0 h-full w-full" role="img" aria-label="PCB layer">
    <g fontFamily='"Liberation Sans", Arial, sans-serif' fontSize="16" fill="#b9b5a5">
      {[[670, 308], [1120, 308], [670, 708], [1120, 708]].map(([x, y]) => (
        <text key={`${x}-${y}`} transform={`translate(${x} ${y}) rotate(-45)`}>
          DZKJ@dzkj_1
        </text>
      ))}
    </g>
    <g fontFamily='"Liberation Sans", "Noto Sans CJK SC", sans-serif' fontSize="7" fontWeight="500" fill={DARK} textAnchor="middle">
      <text x="530" y="328">如需要购买此配件请使用手机淘宝</text>
      <text x="530" y="340">扫描下方二维码进入店铺购买</text>
    </g>
    <QrCode />
    <g transform="translate(440 320) scale(.33333)">
      <g fill={BOARD} stroke="#5f9d7c" strokeWidth="2">
        <path d={outline} />
        <path d={outline} transform="translate(3225 0) scale(-1 1)" />
      </g>
      <ChargerArea />
      <ConnectorArea />
      <BackLeftArea />
      <UsbArea />
    </g>
  </svg>
);

const layers = ["1", "2", "3", "4", "5", "6", "ALL"];
const layerColor: Record<string, string> = { "1": "bg-[#004000]", "6": "bg-[#008040]" };

const LayerPanel = () => (
  <div className="absolute top-0 left-0 flex flex-col gap-[6px] rounded border border-[#dcdcdc] bg-white px-1 py-1">
    {layers.map((layer) => (
      <button
        key={layer}
        className={clsx(
          "flex size-6 items-center justify-center rounded-xs font-['Liberation_Serif',serif] text-[#c8c8c8]",
          layer === "ALL" ? "text-xs" : "text-base",
          layerColor[layer] ?? "bg-[#505050]"
        )}
      >
        {layer}
      </button>
    ))}
  </div>
);

const EdgeHandle = ({ label, side }: { label: string; side: "left" | "right" }) => (
  <button aria-label={label}>
    <svg width="9" height="112" viewBox="0 0 9 112">
      <g transform={side === "left" ? "translate(9 0) scale(-1 1)" : undefined}>
        <path d="M9 0v112L0 98V14z" fill="#d5e9fd" />
        <path d="M9 0L.5 14v84L9 112" fill="none" stroke="#8cc4f5" />
      </g>
      <path d="M6 53l-3 3 3 3" fill="none" stroke="#3a8ee6" strokeWidth="1.200" />
    </svg>
  </button>
);

/* ---------- frame ---------- */

const Logo = () => (
  <svg width="30" height="30" viewBox="0 0 30 30">
    <rect width="30" height="30" rx="3" fill="#fff" />
    <path d="M9 11V3.500Q9 2 10.500 2h10Q22 2 22 3.500V8" fill="none" stroke="#f0441c" strokeWidth="2.500" />
    <path d="M9 15v6.500q0 1 1.500 1h10q1.500 0 1.500-1V15" fill="none" stroke="#14284f" strokeWidth="2.500" />
    <path d="M8 7C0 9 0 14 6 16M1 7l2 4" fill="none" stroke="#14284f" strokeWidth="1.500" />
    <path d="M23 8c7 1 7 6 2 8-4 3-9 4-14 2M25 5l4 3" fill="none" stroke="#f0441c" strokeWidth="1.800" />
    <circle cx="13.500" cy="13" r="3" fill="none" stroke="#14284f" strokeWidth="1.500" />
    <circle cx="18.500" cy="10" r="1.500" fill="#f0441c" />
    <path d="M19 13v5" stroke="#14284f" />
    <text x="15" y="28.500" textAnchor="middle" fontSize="4" fontWeight="700" fontStyle="italic" fontFamily="Liberation Sans, sans-serif" fill="#14284f">
      DZKJ TOOLS
    </text>
  </svg>
);

const TitleBar = () => (
  <header className="flex h-10 shrink-0 items-center bg-linear-to-r from-[#26a3fb] via-[#3073ff] via-20% to-[#2ba0ff] pr-[17px] pl-[10px] text-white">
    <Logo />
    <h1 className="ml-[11px] flex-1 text-sm">DZKJ Schematics [ VIP Due date: 2029-10-31 00:00:00 ]</h1>
    <button aria-label="Membership">
      <svg width="16" height="16" viewBox="0 0 16 16" fill="none" stroke="#e6dc4a" strokeWidth="1.500">
        <rect x=".8" y="4" width="14.500" height="11.200" rx="1.500" />
        <path d="M4.500 4V2q0-1.200 1-1.200h5q1 0 1 1.200v2M3 8.500h10" />
      </svg>
    </button>
    <span className="mr-3 ml-[11px] h-5 w-px bg-white/40" />
    <div className="flex gap-[14px]">
      <button aria-label="Minimize">
        <svg width="16" height="16" viewBox="0 0 16 16" stroke="#fff" strokeWidth="2">
          <path d="M0 8h16" />
        </svg>
      </button>
      <button aria-label="Maximize">
        <svg width="16" height="16" viewBox="0 0 16 16" fill="none" stroke="#fff" strokeWidth="1.500">
          <rect x=".8" y=".8" width="14.400" height="14.400" rx="3" />
        </svg>
      </button>
      <button aria-label="Close">
        <svg width="16" height="16" viewBox="0 0 16 16" stroke="#fff" strokeWidth="1.700">
          <path d="M.5.5l15 15M15.500.5l-15 15" />
        </svg>
      </button>
    </div>
  </header>
);

const menus = ["File(F)", "VIP(V)", "Tool(T)", "Settings(S)", "PCB View settings(S)"];

const App = () => (
  <div className="flex h-screen flex-col overflow-hidden bg-white font-['Noto_Sans','Noto_Sans_CJK_SC',sans-serif] text-sm text-black">
    <TitleBar />
    <div className="flex h-8 shrink-0 items-center gap-[18px] border-b border-[#d8d8d8] bg-[#efefef] pl-[18px]">
      {menus.map((menu) => (
        <button key={menu}>{menu}</button>
      ))}
    </div>
    <main className="flex min-h-0 flex-1">
      <Sidebar />
      <div className="flex w-[10px] shrink-0 items-center border-r border-[#d8d8d8] bg-[#f9fdf8] pt-5">
        <EdgeHandle label="Collapse file list" side="left" />
      </div>
      <section className="flex min-w-0 flex-1 flex-col">
        <div className="flex h-[34px] shrink-0 items-center gap-[5px] border-b border-[#d8d8d8] bg-[#fafafa] pr-[11px] pl-2">
          <button className="flex h-6 w-[139px] items-center gap-1 rounded border border-[#707070] pl-[6px] text-sm whitespace-nowrap text-[#808080]">
            <svg width="18" height="18" viewBox="0 0 18 18" className="shrink-0" fill="none" stroke="#222" strokeWidth="1.300">
              <path d="M1 9.500L9 1.500l8 8M3.500 8v9h11V8M7.500 17v-5h3v5" />
            </svg>
            Member Center
          </button>
          <button className="h-6 w-[259px] rounded border border-black bg-white font-['Open_Sans','Noto_Sans',sans-serif] text-[15px] leading-5 font-bold whitespace-nowrap">
            SM-A70-Tail plug pcb layer.pcb
          </button>
          <button aria-label="Close all" className="ml-auto">
            <svg width="18" height="18" viewBox="0 0 18 18" fill="none">
              <path d="M1 14V1h14" stroke="#8a8a8a" strokeWidth="2" />
              <rect x="4" y="4" width="14" height="14" rx="2" fill="#7a7a7a" />
              <path d="M8 8l6 6M14 8l-6 6" stroke="#fff" strokeWidth="1.500" />
            </svg>
          </button>
        </div>
        <div className="flex min-h-0 flex-1">
          <div className="flex min-w-0 flex-1 flex-col">
            <Toolbar />
            <div className="relative min-h-0 flex-1 bg-white">
              <Board />
              <LayerPanel />
            </div>
          </div>
          <div className="flex w-[10px] shrink-0 items-center border-l border-[#d8d8d8] bg-[#fafafa] pt-8">
            <EdgeHandle label="Open side panel" side="right" />
          </div>
        </div>
      </section>
    </main>
    <footer className="flex h-5 shrink-0 items-center justify-center bg-[#0090d8] font-['DejaVu_Sans_Mono',monospace] text-[15px] text-white">
      DZKJ Schematics https://www.dzkj16888.com
    </footer>
  </div>
);

export default App;
